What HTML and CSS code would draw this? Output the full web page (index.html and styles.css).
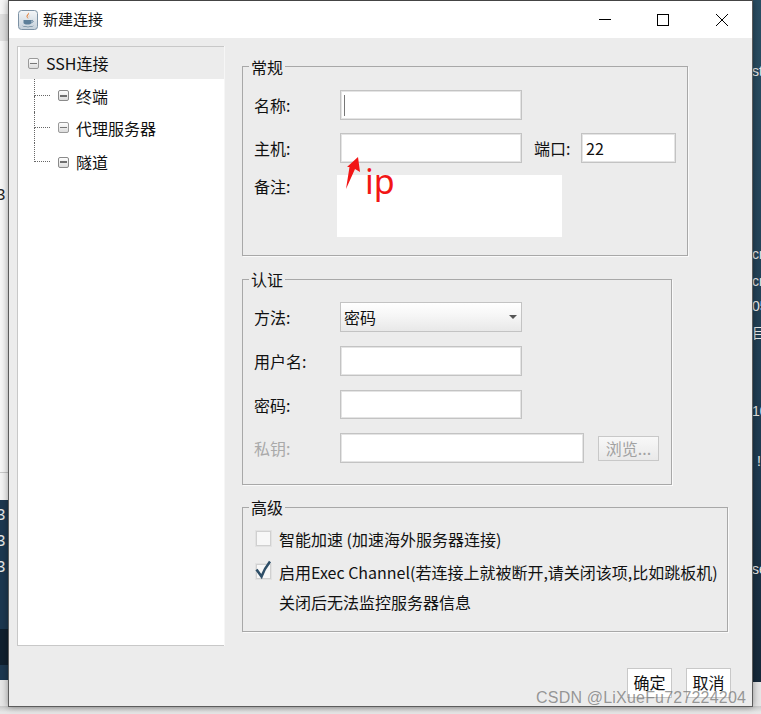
FILE: index.html
```html
<!DOCTYPE html>
<html lang="zh-CN">
<head>
    <meta charset="UTF-8">
    <title>新建连接</title>
    <link rel="stylesheet" href="styles.css">
</head>
<body>
    <div class="desktop">
        <!-- whatever is behind the dialog -->
        <div class="back back-left"></div>
        <div class="back back-tab"></div>
        <div class="back back-term"></div>
        <div class="back back-term-band"></div>
        <div class="back back-right"></div>
        <span class="peek peek-dark left-3">3</span>
        <span class="peek" style="left:-4px;top:506px">3</span>
        <span class="peek" style="left:-4px;top:532px">3</span>
        <span class="peek" style="left:-4px;top:558px">3</span>
        <span class="peek peek-right" style="left:752px;top:61px">st</span>
        <span class="peek peek-right" style="left:752px;top:244px">cr</span>
        <span class="peek peek-right" style="left:752px;top:271px">cr</span>
        <span class="peek peek-right" style="left:752px;top:296px">05</span>
        <span class="peek peek-right" style="left:752px;top:323px">目</span>
        <span class="peek peek-right" style="left:752px;top:401px">10</span>
        <span class="peek peek-right" style="left:757px;top:451px">!</span>
        <span class="peek peek-right" style="left:752px;top:559px">se</span>

        <div class="window">
            <div class="titlebar">
                <svg class="app-icon" width="20" height="20" viewBox="0 0 20 20">
                    <defs>
                        <linearGradient id="appBg" x1="0" y1="0" x2="0" y2="1">
                            <stop offset="0" stop-color="#f4f6f8"/>
                            <stop offset="1" stop-color="#c4d0da"/>
                        </linearGradient>
                    </defs>
                    <rect x="0.5" y="0.5" width="19" height="19" rx="3" fill="url(#appBg)" stroke="#7d92a5"/>
                    <path d="M10.5 2.5c1.5 2-2 3-.8 5 .3.6.8 1 .8 1.5-1-1-2.6-2-1.800-3.600.6-1.100 1.800-1.600 1.800-2.900z" fill="#e2762a"/>
                    <path d="M12.500 5c-1 .8-2 1.300-1.300 2.800-.6-.8-.9-2 1.300-2.800z" fill="#d9772c"/>
                    <path d="M5.500 10h8v2.500c0 1.500-1.500 2-4 2s-4-.5-4-2z" fill="#5d7f99"/>
                    <path d="M13.500 10.500c2-.5 2.500 1.500 0 2.200" fill="none" stroke="#5d7f99"/>
                    <path d="M4 15.500c3 1.500 9 1.500 12 0-2 2.200-10 2.200-12 0z" fill="#48697f"/>
                </svg>
                <span class="title">新建连接</span>
                <div class="win-buttons">
                    <div class="win-btn">
                        <svg width="12" height="12" viewBox="0 0 12 12"><path d="M0 5.500h12" stroke="#000"/></svg>
                    </div>
                    <div class="win-btn">
                        <svg width="12" height="12" viewBox="0 0 12 12"><rect x="0.500" y="0.500" width="11" height="11" fill="none" stroke="#000"/></svg>
                    </div>
                    <div class="win-btn">
                        <svg width="12" height="12" viewBox="0 0 12 12"><path d="M0 0l12 12M12 0L0 12" stroke="#000"/></svg>
                    </div>
                </div>
            </div>

            <div class="content">
                <div class="tree">
                    <div class="tree-root">
                        <span class="node-icon"><i></i></span>
                        <span>SSH连接</span>
                    </div>
                    <div class="tree-item">
                        <div class="branch"><div class="branch-top"></div><div class="branch-rest"></div></div>
                        <span class="node-icon node-bold"><i></i></span>
                        <span>终端</span>
                    </div>
                    <div class="tree-item tree-item-mid">
                        <div class="branch"><div class="branch-top"></div><div class="branch-rest"></div></div>
                        <span class="node-icon"><i></i></span>
                        <span>代理服务器</span>
                    </div>
                    <div class="tree-item tree-item-last">
                        <div class="branch"><div class="branch-top"></div></div>
                        <span class="node-icon node-bold"><i></i></span>
                        <span>隧道</span>
                    </div>
                </div>

                <div class="main">
                    <div class="group group-general">
                        <span class="group-title">常规</span>
                        <div class="row">
                            <label class="lbl">名称:</label>
                            <div class="field"><span class="caret"></span></div>
                        </div>
                        <div class="row">
                            <label class="lbl">主机:</label>
                            <div class="field"></div>
                            <label class="lbl-port">端口:</label>
                            <div class="field field-port">22</div>
                        </div>
                        <div class="row-note">
                            <label class="lbl lbl-note">备注:</label>
                            <div class="note"></div>
                        </div>
                    </div>

                    <div class="group group-auth">
                        <span class="group-title">认证</span>
                        <div class="row">
                            <label class="lbl">方法:</label>
                            <div class="combo">
                                <span>密码</span>
                                <span class="combo-arrow"></span>
                            </div>
                        </div>
                        <div class="row">
                            <label class="lbl">用户名:</label>
                            <div class="field"></div>
                        </div>
                        <div class="row row-short">
                            <label class="lbl">密码:</label>
                            <div class="field"></div>
                        </div>
                        <div class="row">
                            <label class="lbl lbl-off">私钥:</label>
                            <div class="field field-key"></div>
                            <div class="btn-browse">浏览...</div>
                        </div>
                    </div>

                    <div class="group group-adv">
                        <span class="group-title">高级</span>
                        <div class="check-row">
                            <span class="check"></span>
                            <span>智能加速 (加速海外服务器连接)</span>
                        </div>
                        <div class="check-row check-row-on">
                            <span class="check">
                                <svg class="tick" width="20" height="22" viewBox="0 0 20 22"><path d="M2.500 10.500l5 7c2-5.500 5-10.500 8.500-15" fill="none" stroke="#2f4f68" stroke-width="2.600"/></svg>
                            </span>
                            <span class="exec">启用Exec Channel(若连接上就被断开,请关闭该项,比如跳板机)</span>
                        </div>
                        <div class="check-note">关闭后无法监控服务器信息</div>
                    </div>

                    <div class="actions">
                        <div class="btn">确定</div>
                        <div class="btn">取消</div>
                    </div>
                </div>
            </div>
        </div>

        <!-- red annotation drawn on top of the screenshot -->
        <svg class="arrow" width="20" height="36" viewBox="0 0 20 36">
            <path d="M14 1L16 16 11 13 2 33 5.500 11 3 11z" fill="#f21616"/>
        </svg>
        <span class="ip">ip</span>
        <span class="watermark">CSDN @LiXueFu727224204</span>
    </div>
</body>
</html>
```

FILE: styles.css
```css
html, body {
    margin: 0;
    padding: 0;
}

body {
    font-family: "Noto Sans CJK SC", "Noto Sans", sans-serif;
    font-size: 16px;
    line-height: 22px;
    color: #111;
    background: #e4e4e4;
    overflow: hidden;
}

.desktop {
    position: relative;
    width: 761px;
    height: 714px;
    overflow: hidden;
    background: linear-gradient(to bottom, #c9c9c9, #e6e6e6 6px) 0 706px no-repeat #e6e6e6;
}

/* background */
.back {
    position: absolute;
}

.back-left {
    left: 0;
    top: 0;
    width: 8px;
    height: 500px;
    background: linear-gradient(to bottom, #f6f6f6 472px, #c9c9c9 472px, #c9c9c9 473px, #f4f4f4 473px);
}

.back-tab {
    left: 0;
    top: 14px;
    width: 8px;
    height: 27px;
    background: #e0e0e0;
}

.back-term {
    left: 0;
    top: 500px;
    width: 8px;
    height: 180px;
    background: #1d3850;
}

.back-term-band {
    left: 0;
    top: 629px;
    width: 8px;
    height: 36px;
    background: #10202f;
}

.back-right {
    left: 753px;
    top: 0;
    width: 8px;
    height: 682px;
    background: linear-gradient(to bottom, #2a4e63, #1e3a50 70%, #16293a);
}

.peek {
    position: absolute;
    font-family: "Liberation Mono", "Noto Sans CJK SC", monospace;
    font-size: 16px;
    line-height: 20px;
    color: #e8e8e8;
}

.peek-right {
    font-family: "Liberation Sans", "Noto Sans CJK SC", sans-serif;
    font-size: 14px;
    white-space: nowrap;
}

.peek-dark {
    color: #222;
}

.left-3 {
    left: -4px;
    top: 186px;
}

/* dialog */
.window {
    position: relative;
    margin-left: 8px;
    width: 743px;
    height: 705px;
    border: 1px solid #5c5c5c;
    border-top-color: #444;
    background: #ececec;
    box-shadow: 0 0 7px rgba(0, 0, 0, 0.4);
}

.titlebar {
    display: flex;
    align-items: center;
    height: 37px;
    padding-left: 9px;
    background: #fff;
}

.app-icon {
    flex: none;
    margin-top: 1px;
}

.title {
    margin: -1px 0 0 5px;
    font-size: 15px;
}

.win-buttons {
    display: flex;
    margin-left: auto;
    margin-right: 1px;
}

.win-btn {
    display: flex;
    align-items: center;
    justify-content: center;
    width: 58.5px;
    height: 37px;
}

.content {
    display: flex;
    padding: 8px 0 0 8px;
}

/* left tree */
.tree {
    width: 204px;
    height: 598px;
    padding-left: 2px;
    background: #fff;
    border: 1px solid #c8c8c8;
    border-right: none;
    box-shadow: 1px 0 0 #f6f6f6;
}

.tree-root {
    display: flex;
    align-items: center;
    height: 32px;
    padding-left: 8px;
    gap: 7px;
    background: #ececec;
}

.tree-item {
    display: flex;
    align-items: center;
    height: 33px;
    margin-left: 14px;
}

.tree-item-mid {
    height: 31px;
}

.tree-item-last {
    height: 38px;
}

.branch {
    display: flex;
    flex-direction: column;
    align-self: stretch;
    width: 16px;
    margin-right: 8px;
}

.branch-top {
    height: 50%;
    border-left: 1px dotted #666;
    border-bottom: 1px dotted #666;
    box-sizing: border-box;
}

.branch-rest {
    flex: 1;
    border-left: 1px dotted #666;
}

.node-icon {
    display: flex;
    align-items: center;
    justify-content: center;
    box-sizing: border-box;
    width: 11px;
    height: 11px;
    margin-right: 7px;
    border: 1px solid #9a9a9a;
    border-radius: 2px;
    background: linear-gradient(to bottom, #fdfdfd, #dcdcdc);
}

.tree-root .node-icon {
    margin-right: 0;
}

.node-icon i {
    display: block;
    width: 7px;
    height: 1px;
    background: #777;
}

.node-bold {
    border-color: #8a8a8a;
}

.node-bold i {
    height: 2px;
    background: #6e6e6e;
}

/* right side */
.main {
    margin-left: 18px;
    width: 489px;
}

.group {
    position: relative;
    box-sizing: border-box;
    border: 1px solid #a8a8a8;
    box-shadow: 1px 1px 0 #fafafa;
}

.group-title {
    position: absolute;
    left: 6px;
    top: -11px;
    padding: 0 2px;
    background: #ececec;
}

.group-auth .group-title,
.group-adv .group-title {
    top: -12px;
}

.group-general {
    margin-top: 20px;
    width: 446px;
    height: 190px;
    padding: 23px 11px 0;
}

.group-auth {
    margin-top: 23px;
    width: 430px;
    height: 206px;
    padding: 22px 11px 0;
}

.group-adv {
    margin-top: 22px;
    width: 486px;
    height: 125px;
    padding: 15px 13px 0;
}

.row {
    display: flex;
    align-items: center;
    height: 30px;
    margin-bottom: 14px;
}

.group-general .row {
    margin-bottom: 13px;
}

.row-short {
    height: 29px;
}

.lbl {
    flex: none;
    width: 86px;
}

.lbl-off {
    color: #a9a9a9;
}

.lbl-port {
    flex: none;
    width: 47px;
    margin-left: 12px;
}

.field {
    flex: none;
    box-sizing: border-box;
    display: flex;
    align-items: center;
    width: 182px;
    height: 100%;
    padding-left: 3px;
    background: #fff;
    border: 1px solid #c3c3c3;
    box-shadow: 0 0 0 1px #e4e4e4 inset;
}

.field-port {
    width: 95px;
    padding-left: 4px;
}

.field-key {
    width: 244px;
}

.caret {
    display: block;
    width: 1px;
    height: 21px;
    background: #777;
}

.row-note {
    display: flex;
    margin-top: -1px;
}

.lbl-note {
    width: 83px;
}

.note {
    width: 225px;
    height: 62px;
    background: #fff;
}

.combo {
    flex: none;
    box-sizing: border-box;
    display: flex;
    align-items: center;
    justify-content: space-between;
    width: 182px;
    height: 100%;
    padding: 0 4px 0 3px;
    border: 1px solid #c3c3c3;
    background: linear-gradient(to bottom, #ffffff, #f6f6f6 45%, #e8e8e8);
}

.combo-arrow {
    width: 0;
    height: 0;
    border-left: 4px solid transparent;
    border-right: 4px solid transparent;
    border-top: 4px solid #555;
}

.btn-browse {
    flex: none;
    box-sizing: border-box;
    width: 61px;
    height: 25px;
    margin-left: 14px;
    line-height: 23px;
    text-align: center;
    color: #a2a2a2;
    border: 1px solid #c8c8c8;
    background: linear-gradient(to bottom, #f8f8f8, #e9e9e9);
}

.check-row {
    display: flex;
    align-items: center;
    height: 32px;
}

.check-row-on {
    margin-top: 1px;
}

.check {
    flex: none;
    position: relative;
    box-sizing: border-box;
    width: 15px;
    height: 15px;
    margin: -1px 8px 0 0;
    border: 1px solid #d0d0d0;
    box-shadow: 0 0 0 1px #e2e2e2;
    background: #f7f7f7;
}

.check-row-on .check {
    margin-top: -2px;
}

.tick {
    position: absolute;
    left: -3px;
    top: -6px;
}

.exec {
    white-space: nowrap;
}

.check-note {
    margin: -2px 0 0 23px;
    height: 32px;
    line-height: 32px;
}

.actions {
    display: flex;
    justify-content: flex-end;
    gap: 14px;
    margin-top: 36px;
}

.btn {
    box-sizing: border-box;
    width: 45px;
    height: 30px;
    line-height: 26px;
    text-align: center;
    border: 1px solid #c8c8c8;
    background: #fff;
}

/* annotation + watermark */
.arrow {
    position: absolute;
    left: 344px;
    top: 156px;
}

.ip {
    position: absolute;
    left: 365px;
    top: 158px;
    font-family: "Noto Sans", sans-serif;
    font-size: 34px;
    line-height: 46px;
    color: #f21616;
}

.watermark {
    position: absolute;
    left: 536px;
    top: 688px;
    font-family: "Liberation Sans", sans-serif;
    font-size: 16px;
    line-height: 20px;
    letter-spacing: 0.2px;
    color: rgba(110, 110, 110, 0.7);
    white-space: nowrap;
}
```
